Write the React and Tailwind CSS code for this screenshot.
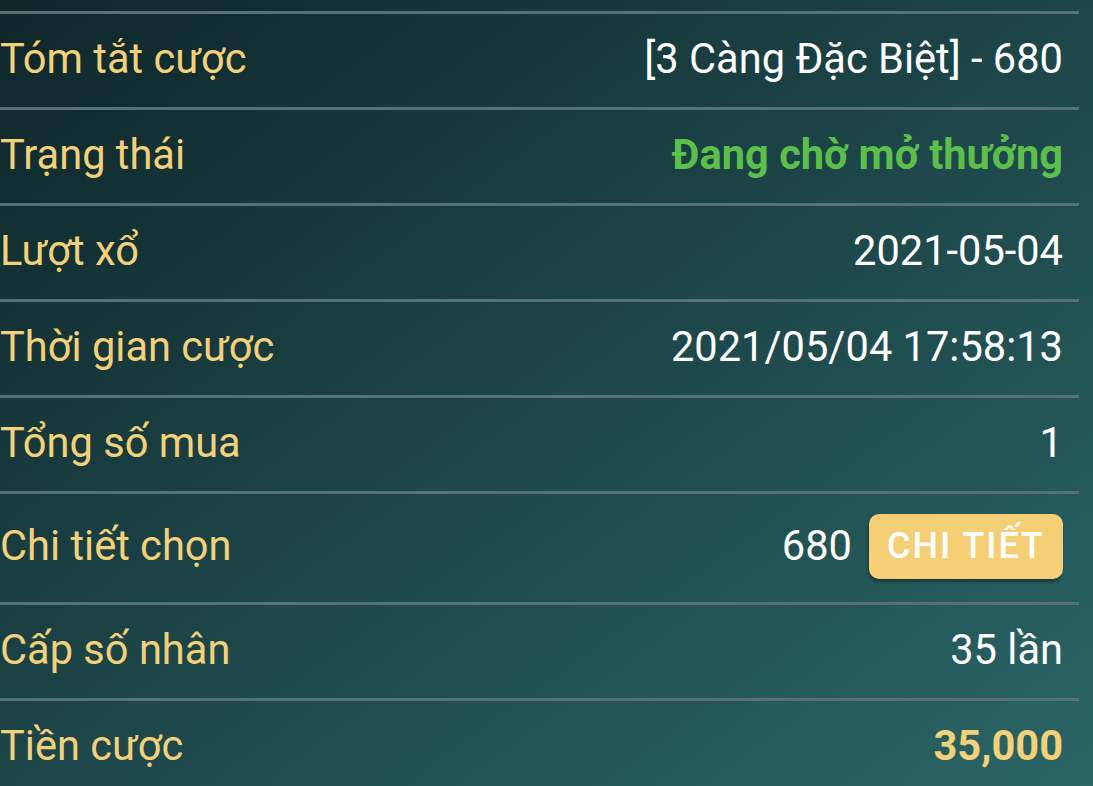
const rows = [
  { label: 'Tóm tắt cược', value: '[3 Càng Đặc Biệt] - 680' },
  { label: 'Trạng thái', value: 'Đang chờ mở thưởng', tone: 'green' },
  { label: 'Lượt xổ', value: '2021-05-04' },
  { label: 'Thời gian cược', value: '2021/05/04 17:58:13' },
  { label: 'Tổng số mua', value: '1' },
  { label: 'Chi tiết chọn', value: '680', button: true },
  { label: 'Cấp số nhân', value: '35 lần' },
  { label: 'Tiền cược', value: '35,000', tone: 'gold' },
];

function Row({ label, value, tone, button }) {
  const valueClass =
    tone === 'green'
      ? 'text-[#5cbf4c] font-bold'
      : tone === 'gold'
      ? 'text-[#f3d17b] font-bold'
      : 'text-white';
  return (
    <div
      className={`flex items-center justify-between border-t-[3px] border-[#577275] pr-[16px] pb-[3px] ${
        button ? 'h-[111px]' : 'h-[96px]'
      }`}
    >
      <span className="text-[#f3d17b]">{label}</span>
      <div className="flex items-center gap-[17px]">
        <span className={valueClass}>{value}</span>
        {button && (
          <button className="h-[65px] w-[194px] rounded-[10px] bg-[#f4cf76] text-[36px] font-medium tracking-[2px] text-white shadow-[-1px_3px_3px_rgba(0,0,0,0.35)]">
            CHI TIẾT
          </button>
        )}
      </div>
    </div>
  );
}

export default function App() {
  return (
    <div
      className="h-[786px] w-[1093px] overflow-hidden bg-gradient-to-br from-[#0f2629] via-[#1d4649] to-[#2b6566] pt-[11px] text-[41.6px] leading-[1.172]"
      style={{ fontFamily: 'Roboto, "Noto Sans", sans-serif' }}
    >
      <div className="w-[1079px]">
        {rows.map((r) => (
          <Row key={r.label} {...r} />
        ))}
      </div>
    </div>
  );
}
